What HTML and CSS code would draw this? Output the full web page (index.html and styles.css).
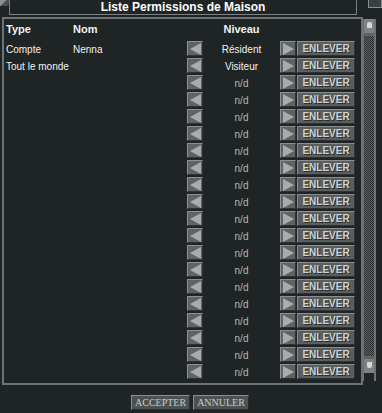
FILE: index.html
```html
<!DOCTYPE html>
<html>
  <head>
    <meta charset='utf-8' />
    <title>Liste Permissions de Maison</title>
    <link rel="stylesheet" href="styles.css">
  </head>
  <body>
    <div class='window'>
      <div class='titlebar'>
        <span class='corner-l'></span>
        <div class='title-frame'><h1>Liste Permissions de Maison</h1></div>
        <span class='corner-r'><span class='close'></span></span>
      </div>
      <div class='main'>
        <div class='panel'>
          <div class='row head'>
            <span>Type</span><span>Nom</span><span></span><span class='level'>Niveau</span>
          </div>
          <div class='row'>
            <span>Compte</span><span>Nenna</span>
            <button class='arrow left'></button><span class='level'>Résident</span>
            <button class='arrow right'></button><button class='remove'>ENLEVER</button>
          </div>
          <div class='row'>
            <span>Tout le monde</span><span></span>
            <button class='arrow left'></button><span class='level'>Visiteur</span>
            <button class='arrow right'></button><button class='remove'>ENLEVER</button>
          </div>
          <div class='row'><span></span><span></span><button class='arrow left'></button><span class='level na'>n/d</span><button class='arrow right'></button><button class='remove'>ENLEVER</button></div>
          <div class='row'><span></span><span></span><button class='arrow left'></button><span class='level na'>n/d</span><button class='arrow right'></button><button class='remove'>ENLEVER</button></div>
          <div class='row'><span></span><span></span><button class='arrow left'></button><span class='level na'>n/d</span><button class='arrow right'></button><button class='remove'>ENLEVER</button></div>
          <div class='row'><span></span><span></span><button class='arrow left'></button><span class='level na'>n/d</span><button class='arrow right'></button><button class='remove'>ENLEVER</button></div>
          <div class='row'><span></span><span></span><button class='arrow left'></button><span class='level na'>n/d</span><button class='arrow right'></button><button class='remove'>ENLEVER</button></div>
          <div class='row'><span></span><span></span><button class='arrow left'></button><span class='level na'>n/d</span><button class='arrow right'></button><button class='remove'>ENLEVER</button></div>
          <div class='row'><span></span><span></span><button class='arrow left'></button><span class='level na'>n/d</span><button class='arrow right'></button><button class='remove'>ENLEVER</button></div>
          <div class='row'><span></span><span></span><button class='arrow left'></button><span class='level na'>n/d</span><button class='arrow right'></button><button class='remove'>ENLEVER</button></div>
          <div class='row'><span></span><span></span><button class='arrow left'></button><span class='level na'>n/d</span><button class='arrow right'></button><button class='remove'>ENLEVER</button></div>
          <div class='row'><span></span><span></span><button class='arrow left'></button><span class='level na'>n/d</span><button class='arrow right'></button><button class='remove'>ENLEVER</button></div>
          <div class='row'><span></span><span></span><button class='arrow left'></button><span class='level na'>n/d</span><button class='arrow right'></button><button class='remove'>ENLEVER</button></div>
          <div class='row'><span></span><span></span><button class='arrow left'></button><span class='level na'>n/d</span><button class='arrow right'></button><button class='remove'>ENLEVER</button></div>
          <div class='row'><span></span><span></span><button class='arrow left'></button><span class='level na'>n/d</span><button class='arrow right'></button><button class='remove'>ENLEVER</button></div>
          <div class='row'><span></span><span></span><button class='arrow left'></button><span class='level na'>n/d</span><button class='arrow right'></button><button class='remove'>ENLEVER</button></div>
          <div class='row'><span></span><span></span><button class='arrow left'></button><span class='level na'>n/d</span><button class='arrow right'></button><button class='remove'>ENLEVER</button></div>
          <div class='row'><span></span><span></span><button class='arrow left'></button><span class='level na'>n/d</span><button class='arrow right'></button><button class='remove'>ENLEVER</button></div>
          <div class='row'><span></span><span></span><button class='arrow left'></button><span class='level na'>n/d</span><button class='arrow right'></button><button class='remove'>ENLEVER</button></div>
          <div class='row'><span></span><span></span><button class='arrow left'></button><span class='level na'>n/d</span><button class='arrow right'></button><button class='remove'>ENLEVER</button></div>
        </div>
        <div class='scroll'>
          <span class='scroll-btn up'></span>
          <span class='track'></span>
          <span class='scroll-btn down'></span>
        </div>
      </div>
      <div class='footer'>
        <button class='action'>ACCEPTER</button>
        <button class='action'>ANNULER</button>
      </div>
    </div>
  </body>
</html>
```

FILE: styles.css
```css
* {
  box-sizing: border-box;
}
body, html {
  margin: 0;
  padding: 0;
  width: 382px;
  height: 413px;
  overflow: hidden;
}
body {
  background: #1f2424;
  color: #f2f2f2;
  font-family: "Liberation Sans", Arial, sans-serif;
}
.window {
  width: 382px;
  height: 413px;
}
.titlebar {
  display: flex;
  height: 15px;
}
.corner-l {
  width: 9px;
  height: 6px;
  background: linear-gradient(135deg, #8a8e8e 0 45%, #4a4e4e 45% 100%);
  border-radius: 0 0 3px 0;
}
.title-frame {
  width: 348px;
  height: 15px;
  border: 1px solid #7c8080;
  border-top: none;
}
h1 {
  margin: 0;
  font-size: 12px;
  line-height: 14px;
  text-align: center;
  color: #ffffff;
}
.corner-r {
  flex: 1;
  display: flex;
  justify-content: flex-end;
}
.close {
  width: 14px;
  height: 8px;
  border: 1px solid #8a8e8e;
  border-top: none;
  background: #3a3f3f;
}
.main {
  display: flex;
  margin-top: 2px;
}
.panel {
  margin-left: 2px;
  width: 361px;
  height: 368px;
  border: 2px solid #6e7272;
  padding-left: 2px;
}
.row {
  display: grid;
  grid-template-columns: 67px 114px 16px 77px 17px 58px;
  height: 17px;
  align-items: center;
  font-size: 10px;
}
.row > span {
  align-self: start;
  padding-top: 3px;
  line-height: 14px;
  white-space: nowrap;
}
.row.head {
  height: 21px;
  font-size: 11px;
  font-weight: bold;
}
.row.head > span {
  padding-top: 0;
  line-height: 21px;
}
.level {
  text-align: center;
}
.na {
  color: #b4b8b8;
}
button {
  padding: 0;
  margin: 0;
  font-family: inherit;
}
.arrow {
  width: 16px;
  height: 15px;
  background: #5f6363;
  border: 1px solid;
  border-color: #8c9090 #2e3232 #2e3232 #8c9090;
}
.arrow::before {
  content: '';
  display: block;
  margin: 0 auto;
  width: 0;
  height: 0;
  border-top: 6px solid transparent;
  border-bottom: 6px solid transparent;
}
.arrow.left::before {
  border-right: 11px solid #a8acac;
}
.arrow.right::before {
  border-left: 11px solid #a8acac;
}
.remove {
  width: 58px;
  height: 15px;
  background: #5a5e5e;
  border: 1px solid;
  border-color: #8a8e8e #2e3232 #2e3232 #8a8e8e;
  color: #cfd2d2;
  font-size: 10px;
  font-weight: bold;
  line-height: 13px;
  text-shadow: 1px 1px 0 #2a2d2d;
}
.scroll {
  width: 13px;
  height: 362px;
  margin-top: 2px;
  display: flex;
  flex-direction: column;
  border-left: 1px solid #6e7272;
  border-right: 2px solid #6e7272;
}
.scroll-btn {
  height: 17px;
  background: #7e8282;
  border-bottom: 3px solid #5e6262;
}
.scroll-btn::before {
  content: '';
  display: block;
  margin: 3px auto 0;
  width: 5px;
  height: 6px;
  background: #d6d8d8;
  border-radius: 2px 2px 0 0;
}
.scroll-btn.down {
  margin-bottom: 8px;
  border-bottom: none;
  border-top: 3px solid #5e6262;
}
.scroll-btn.down::before {
  border-radius: 0 0 2px 2px;
}
.track {
  flex: 1;
  background-image: repeating-conic-gradient(#5c6060 0 25%, #2c3030 0 50%);
  background-size: 2px 2px;
}
.footer {
  display: flex;
  gap: 3px;
  padding: 10px 0 0 131px;
}
.action {
  height: 15px;
  padding: 0 3px;
  background: #4d5151;
  border: 1px solid;
  border-color: #8a8e8e #2a2e2e #2a2e2e #8a8e8e;
  color: #c8cbcb;
  font-family: "Liberation Serif", "Times New Roman", serif;
  font-size: 10px;
  line-height: 13px;
}
```
